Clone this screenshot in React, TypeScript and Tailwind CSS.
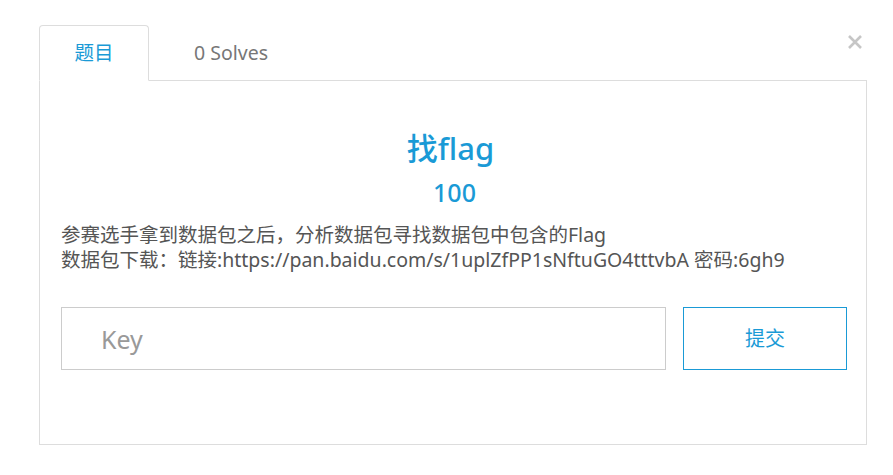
import React, { useState } from "react"

const font = { fontFamily: '"Noto Sans", "Noto Sans CJK SC", sans-serif' }

export default function App() {
  const [activeTab, setActiveTab] = useState("challenge")
  const [key, setKey] = useState("")

  return (
    <div className="w-[893px] h-[475px] bg-white relative" style={font}>
      {/* close button */}
      <button className="absolute left-[847px] top-[34px] w-[16px] h-[16px] flex items-center justify-center">
        <svg width="16" height="16" viewBox="0 0 16 16">
          <path d="M2 2 L14 14 M14 2 L2 14" stroke="#c6c6c6" strokeWidth="2.6" strokeLinecap="butt" />
        </svg>
      </button>

      <div className="pt-[25px] pl-[39px] w-[867px]">
        {/* tabs */}
        <div className="flex h-[56px] border-b border-[#dddddd]">
          <button
            onClick={() => setActiveTab("challenge")}
            className={`w-[110px] h-[56px] rounded-t-[4px] text-[19.5px] -mb-px ${
              activeTab === "challenge"
                ? "border border-[#dddddd] border-b-white bg-white text-[#1a9ad6]"
                : "text-[#777]"
            }`}
          >
            题目
          </button>
          <button
            onClick={() => setActiveTab("solves")}
            className={`w-[164px] h-[56px] rounded-t-[4px] text-[19.5px] -mb-px ${
              activeTab === "solves"
                ? "border border-[#dddddd] border-b-white bg-white text-[#1a9ad6]"
                : "text-[#777]"
            }`}
          >
            0 Solves
          </button>
        </div>

        {/* panel */}
        <div className="h-[364px] border border-t-0 border-[#dddddd] pl-[21px] pr-[18px] pt-[47px]">
          <h2 className="text-center text-[31px] leading-[40px] font-medium text-[#1a9ad6] -ml-[8px]">找flag</h2>
          <div className="text-center text-[25px] leading-[32px] font-medium text-[#1a9ad6] mt-[8px]">100</div>
          <p className="mt-[14px] text-[19.5px] leading-[25px] text-[#555]">
            参赛选手拿到数据包之后，分析数据包寻找数据包中包含的Flag
            <br />
            数据包下载：链接:https://pan.baidu.com/s/1uplZfPP1sNftuGO4tttvbA 密码:6gh9
          </p>

          <div className="flex gap-[17px] mt-[35px]">
            <input
              value={key}
              onChange={(e) => setKey(e.target.value)}
              placeholder="Key"
              className="w-[605px] shrink-0 h-[63px] border border-[#cccccc] px-[39px] text-[25px] text-[#555] placeholder:text-[#999] outline-none"
              style={font}
            />
            <button className="w-[164px] shrink-0 h-[63px] border border-[#1a9ad6] text-[20px] text-[#1a9ad6]">
              提交
            </button>
          </div>
        </div>
      </div>
    </div>
  )
}
